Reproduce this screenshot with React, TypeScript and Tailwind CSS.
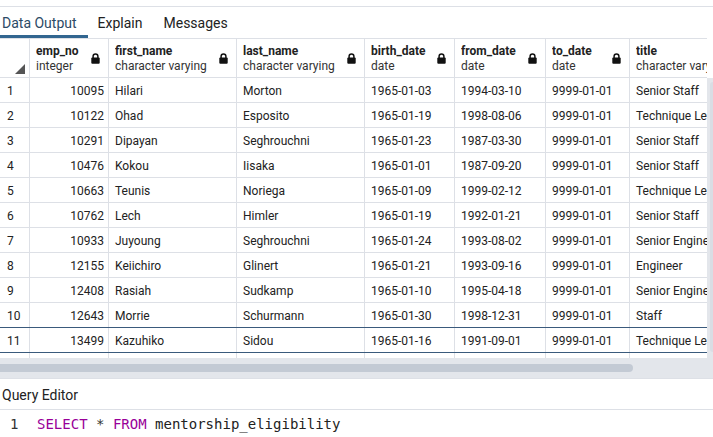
const columns = [
  { name: "emp_no", type: "integer", w: "w-[79px]" },
  { name: "first_name", type: "character varying", w: "w-[128px]" },
  { name: "last_name", type: "character varying", w: "w-[128px]" },
  { name: "birth_date", type: "date", w: "w-[90px]" },
  { name: "from_date", type: "date", w: "w-[91px]" },
  { name: "to_date", type: "date", w: "w-[84px]" },
  { name: "title", type: "character varying", w: "w-[110px]" },
]

const rows = [
  ["10095", "Hilari", "Morton", "1965-01-03", "1994-03-10", "9999-01-01", "Senior Staff"],
  ["10122", "Ohad", "Esposito", "1965-01-19", "1998-08-06", "9999-01-01", "Technique Leader"],
  ["10291", "Dipayan", "Seghrouchni", "1965-01-23", "1987-03-30", "9999-01-01", "Senior Staff"],
  ["10476", "Kokou", "Iisaka", "1965-01-01", "1987-09-20", "9999-01-01", "Senior Staff"],
  ["10663", "Teunis", "Noriega", "1965-01-09", "1999-02-12", "9999-01-01", "Technique Leader"],
  ["10762", "Lech", "Himler", "1965-01-19", "1992-01-21", "9999-01-01", "Senior Staff"],
  ["10933", "Juyoung", "Seghrouchni", "1965-01-24", "1993-08-02", "9999-01-01", "Senior Engineer"],
  ["12155", "Keiichiro", "Glinert", "1965-01-21", "1993-09-16", "9999-01-01", "Engineer"],
  ["12408", "Rasiah", "Sudkamp", "1965-01-10", "1995-04-18", "9999-01-01", "Senior Engineer"],
  ["12643", "Morrie", "Schurmann", "1965-01-30", "1998-12-31", "9999-01-01", "Staff"],
  ["13499", "Kazuhiko", "Sidou", "1965-01-16", "1991-09-01", "9999-01-01", "Technique Leader"],
]

function PadLock() {
  return (
    <svg width="9" height="11" viewBox="0 0 9 11" className="shrink-0 mt-[1px]">
      <path d="M2.1 5V3.3a2.4 2.4 0 0 1 4.8 0V5" fill="none" stroke="#111" strokeWidth="1.5" />
      <rect x="0.3" y="4.6" width="8.4" height="6.2" rx="1" fill="#111" />
    </svg>
  )
}

export default function App() {
  return (
    <div className="w-[713px] h-[437px] overflow-hidden bg-white text-[#222] font-['Roboto',sans-serif]">
      <div className="h-[6px]" />
      <div className="border-t border-[#dde0e6] flex items-end h-[32px] text-[14px]">
        <div className="pl-[2px] pr-[11px] h-full flex items-center border-b-[3px] border-[#326690] text-[#2c4a66] pt-[4px]">
          Data Output
        </div>
        <div className="px-[10px] h-full flex items-center pt-[4px] pb-[3px]">Explain</div>
        <div className="px-[11px] h-full flex items-center pt-[4px] pb-[3px]">Messages</div>
      </div>

      <div className="flex">
        <div className="w-[707px] overflow-hidden">
          <div className="flex border-t border-b border-[#dde0e6] h-[40px] w-max">
            <div className="w-[30px] border-r border-[#dde0e6] flex items-end justify-end pr-[4px] pb-[3px]">
              <svg width="10" height="10" viewBox="0 0 10 10">
                <path d="M10 0V10H0Z" fill="#555" />
              </svg>
            </div>
            {columns.map((c) => (
              <div key={c.name} className={`${c.w} border-r border-[#dde0e6] flex items-center pl-[6px] pr-[8px]`}>
                <div className="flex-1 leading-[15px] text-[12px] whitespace-nowrap overflow-hidden pt-[2px]">
                  <div className="font-bold text-[#222]">{c.name}</div>
                  <div className="text-[#333]">{c.type}</div>
                </div>
                {c.name !== "title" && <PadLock />}
              </div>
            ))}
          </div>
          {rows.map((r, i) => (
            <div
              key={i}
              className={`flex h-[25px] w-max text-[12px] border-b ${
                i === 9 || i === 10 ? "border-[#3a5a7c]" : "border-[#dde0e6]"
              }`}
            >
              <div className="w-[30px] border-r border-[#dde0e6] flex items-center pl-[7px] pt-[1px]">{i + 1}</div>
              {r.map((v, j) => (
                <div
                  key={j}
                  className={`${columns[j].w} border-r border-[#dde0e6] flex items-center whitespace-nowrap overflow-hidden pt-[1px] ${
                    j === 0 ? "justify-end pr-[4px]" : "pl-[6px]"
                  }`}
                >
                  {v}
                </div>
              ))}
            </div>
          ))}
          <div className="flex h-[5px] w-max">
            <div className="w-[30px] border-r border-[#dde0e6]" />
            {columns.map((c) => (
              <div key={c.name} className={`${c.w} border-r border-[#dde0e6]`} />
            ))}
          </div>
        </div>
        <div className="w-[6px] mt-[40px] bg-[#e3e6eb] relative">
          <div className="absolute left-[3px] top-[4px] w-[6px] h-[270px] rounded-full bg-[#d9dde4]" />
        </div>
      </div>

      <div className="h-[20px] bg-[#e3e6eb] flex items-center">
        <div className="w-[633px] h-[8px] rounded-r-full bg-[#c3cad4]" />
      </div>

      <div className="border-t border-b border-[#dde0e6] h-[32px] flex items-center pl-[2px] pt-[2px] text-[14px]">
        Query Editor
      </div>

      <div className="flex items-center h-[28px] font-['DejaVu_Sans_Mono',monospace] text-[14px]">
        <div className="w-[37px] pl-[10px] text-[#333]">1</div>
        <div>
          <span className="text-[#990099]">SELECT</span> <span className="text-[#333]">*</span>{" "}
          <span className="text-[#990099]">FROM</span> mentorship_eligibility
        </div>
      </div>
    </div>
  )
}
